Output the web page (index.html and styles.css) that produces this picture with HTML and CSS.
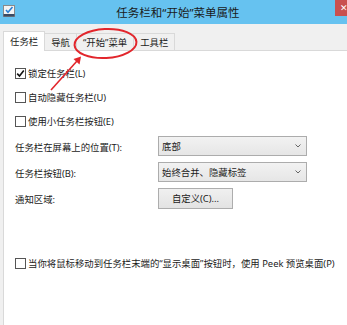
FILE: index.html
```html
<!DOCTYPE html>
<html>
	<head>
		<meta charset="UTF-8">
		<title>任务栏和“开始”菜单属性</title>
		<link rel="stylesheet" href="styles.css">
	</head>
	<body>
		<div class="window">
			<div class="titlebar">
				<svg class="app-icon" width="12" height="12" viewBox="0 0 12 12">
					<rect x="0.5" y="0.5" width="11" height="11" fill="#f4f4f4" stroke="#8a8a8a"/>
					<rect x="0.5" y="9" width="11" height="2.5" fill="#3b4a63"/>
					<path d="M3 5 L5 7.2 L9.5 2" fill="none" stroke="#2a7fd4" stroke-width="1.6"/>
				</svg>
				<span class="title">任务栏和“开始”菜单属性</span>
				<span class="close">✕</span>
			</div>

			<div class="content">
				<div class="tabs">
					<span class="tab active">任务栏</span>
					<span class="tab">导航</span>
					<span class="tab">“开始”菜单</span>
					<span class="tab">工具栏</span>
				</div>

				<div class="panel">
					<div class="check">
						<span class="box">
							<svg width="9" height="9" viewBox="0 0 9 9"><path d="M1.2 4.6 L3.5 7 L7.8 1.6" fill="none" stroke="#111" stroke-width="1.6"/></svg>
						</span>
						锁定任务栏(L)
					</div>
					<div class="check"><span class="box"></span>自动隐藏任务栏(U)</div>
					<div class="check"><span class="box"></span>使用小任务栏按钮(E)</div>

					<div class="field">
						<span class="field-label">任务栏在屏幕上的位置(T):</span>
						<span class="select">底部
							<svg class="chevron" width="6" height="4" viewBox="0 0 6 4"><path d="M0.5 0.5 L3 3 L5.5 0.5" fill="none" stroke="#666" stroke-width="1"/></svg>
						</span>
					</div>
					<div class="field">
						<span class="field-label">任务栏按钮(B):</span>
						<span class="select">始终合并、隐藏标签
							<svg class="chevron" width="6" height="4" viewBox="0 0 6 4"><path d="M0.5 0.5 L3 3 L5.5 0.5" fill="none" stroke="#666" stroke-width="1"/></svg>
						</span>
					</div>
					<div class="field">
						<span class="field-label">通知区域:</span>
						<span class="button">自定义(C)...</span>
					</div>

					<div class="check peek"><span class="box"></span>当你将鼠标移动到任务栏末端的“显示桌面”按钮时，使用 Peek 预览桌面(P)</div>
				</div>
			</div>

			<!-- red marks drawn over the screenshot -->
			<svg class="marks" width="347" height="325" viewBox="0 0 347 325">
				<ellipse cx="105.5" cy="43.5" rx="31" ry="14.5" transform="rotate(-3 105.5 43.5)" fill="none" stroke="#e2262c" stroke-width="2"/>
				<line x1="51" y1="90" x2="77" y2="61" stroke="#e2262c" stroke-width="1.6"/>
				<polygon points="81,56.5 79.5,64.5 73.5,59" fill="#e2262c"/>
			</svg>
		</div>
	</body>
</html>
```

FILE: styles.css
```css
html, body {
	margin: 0;
	padding: 0;
}

body {
	width: 347px;
	height: 325px;
	overflow: hidden;
	background: #f0f0f0;
	font-family: "Noto Sans", "Noto Sans CJK SC", sans-serif;
	font-size: 9.4px;
	color: #1b1b1b;
}

.window {
	position: relative;
	display: flex;
	flex-direction: column;
	height: 325px;
}

.titlebar {
	display: flex;
	align-items: flex-start;
	height: 24px;
	background: #66c2f0;
}

.app-icon {
	margin: 5px 0 0 3px;
}

.title {
	flex: 1;
	text-align: center;
	padding-left: 6px;
	font-size: 11.5px;
	line-height: 26px;
	color: #1a1a1a;
}

.close {
	width: 12px;
	height: 16px;
	background: #c9504f;
	color: #fff;
	font-size: 9px;
	line-height: 16px;
	text-indent: 5px;
	overflow: hidden;
}

.content {
	flex: 1;
	display: flex;
	flex-direction: column;
	padding-left: 3px;
}

.tabs {
	display: flex;
	align-items: flex-end;
	height: 26px;
}

.tab {
	height: 17px;
	line-height: 17px;
	padding: 0 6px;
	border: 1px solid #d9d9d9;
	border-bottom: none;
	border-left: none;
	background: #f0f0f0;
	box-sizing: border-box;
}

.tab.active {
	height: 20px;
	line-height: 19px;
	padding: 0 6px;
	border-left: 1px solid #d9d9d9;
	background: #fff;
	margin-bottom: -1px;
	position: relative;
}

.panel {
	flex: 1;
	background: #fff;
	border-top: 1px solid #d9d9d9;
	border-left: 1px solid #d9d9d9;
	padding: 10px 0 0 11px;
}

.check {
	display: flex;
	align-items: center;
	height: 24px;
	gap: 2px;
	white-space: nowrap;
}

.box {
	display: flex;
	align-items: center;
	justify-content: center;
	width: 11px;
	height: 11px;
	border: 1px solid #555;
	box-sizing: border-box;
	background: #fff;
}

.check.peek {
	margin-top: 40px;
}

.field {
	display: flex;
	align-items: center;
	height: 26px;
}

.field-label {
	width: 143px;
	padding-top: 2px;
}

.select {
	display: flex;
	align-items: center;
	justify-content: space-between;
	width: 149px;
	height: 20px;
	padding: 0 5px 0 3px;
	box-sizing: border-box;
	border: 1px solid #acacac;
	background: linear-gradient(#f2f2f2, #e6e6e6);
}

.button {
	width: 75px;
	height: 21px;
	line-height: 19px;
	text-align: center;
	box-sizing: border-box;
	border: 1px solid #adadad;
	background: linear-gradient(#f0f0f0, #e3e3e3);
}

.marks {
	position: absolute;
	left: 0;
	top: 0;
	pointer-events: none;
}
```
